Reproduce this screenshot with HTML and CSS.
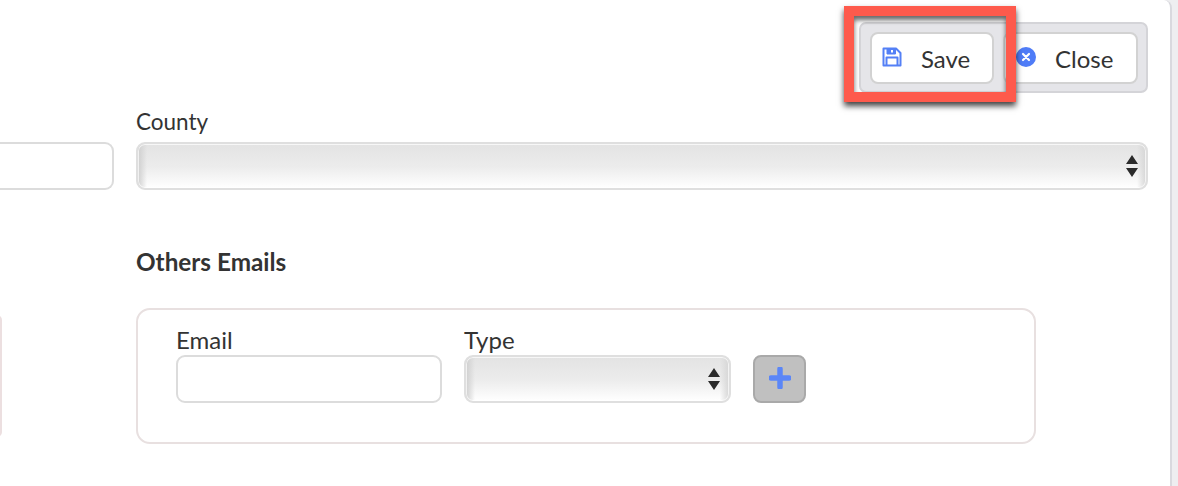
FILE: index.html
```html
<!DOCTYPE html>
<html lang="en-US">
	<head>
		<title>Contact</title>
		<link rel="stylesheet" href="styles.css">
	</head>
	<body>
		<div class="panel">
			<div class="toolbar">
				<div class="btn-group">
					<button class="btn btn-save">
						<svg class="btn-icon" width="20" height="20" viewBox="0 0 20 20" fill="none" stroke="#5480f6" stroke-width="2" stroke-linejoin="round">
							<path d="M1.5 1.5h12.5l4.5 4.5v12.5h-17z"/>
							<path d="M5 2h8.5v5H5z" fill="#5480f6" stroke-width="1"/>
							<path d="M10 3v2.5" stroke="#fff" stroke-width="2"/>
							<path d="M4.5 18v-7.500h11v7.500"/>
						</svg>
						<span class="btn-text">Save</span>
					</button>
					<button class="btn btn-close">
						<svg class="btn-icon" width="20" height="20" viewBox="0 0 20 20">
							<circle cx="10" cy="10" r="10" fill="#4f7cf7"/>
							<path d="M7 7l6 6M13 7l-6 6" stroke="#fff" stroke-width="2.200" stroke-linecap="round"/>
						</svg>
						<span class="btn-text">Close</span>
					</button>
				</div>
			</div>

			<div class="form-row">
				<div class="field field-cut">
					<input class="input" type="text">
				</div>
				<div class="field field-county">
					<label>County</label>
					<div class="select select-wide">
						<svg width="12" height="22" viewBox="0 0 12 22" fill="#2b2b2b">
							<path d="M6 0l6 9H0zM6 22l-6-9h12z"/>
						</svg>
					</div>
				</div>
			</div>

			<div class="lower">
				<div class="side-box"></div>
				<div class="emails">
					<h3>Others Emails</h3>
					<div class="email-box">
						<div class="field field-email">
							<label>Email</label>
							<input class="input" type="text">
						</div>
						<div class="field field-type">
							<label>Type</label>
							<div class="select">
								<svg width="12" height="22" viewBox="0 0 12 22" fill="#2b2b2b">
									<path d="M6 0l6 9H0zM6 22l-6-9h12z"/>
								</svg>
							</div>
						</div>
						<button class="add-btn">
							<svg width="22" height="22" viewBox="0 0 22 22">
								<path d="M11 2v18M2 11h18" stroke="#5b86f7" stroke-width="5.500" stroke-linecap="round"/>
							</svg>
						</button>
					</div>
				</div>
			</div>
		</div>

		<div class="callout"></div>
	</body>
</html>
```

FILE: styles.css
```css
* {
	box-sizing: border-box;
	font-family: Lato, "Helvetica Neue", Arial, sans-serif;
}

body {
	margin: 0;
	height: 486px;
	overflow: hidden;
	background: #eeeef0;
	color: #333;
}

.panel {
	position: relative;
	width: 1172px;
	height: 486px;
	background: #fff;
	border-right: 2px solid #d9d9de;
	border-top-right-radius: 8px;
}

.toolbar {
	display: flex;
	justify-content: flex-end;
	padding: 22px 22px 0 0;
}

.btn-group {
	display: flex;
	gap: 9px;
	padding: 8px 8px 8px 9px;
	width: 289px;
	height: 71px;
	background: #e5e5e9;
	border: 2px solid #d4d4d8;
	border-radius: 7px;
}

.btn {
	display: flex;
	align-items: center;
	height: 52px;
	padding: 0;
	background: #fff;
	color: #333;
	font-size: 24px;
	border: 2px solid #d2d2d2;
	border-radius: 8px;
}
.btn-save {
	width: 124px;
	padding-left: 10px;
}
.btn-save .btn-icon {
	margin-right: 19px;
	margin-top: -3px;
}
.btn-close {
	width: 135px;
	padding-left: 11px;
}
.btn-close .btn-icon {
	margin-right: 19px;
	margin-top: -3px;
}

.form-row {
	display: flex;
	margin-top: 15px;
	gap: 22px;
}

.field {
	display: flex;
	flex-direction: column;
}
.field label {
	font-size: 24px;
	line-height: 26px;
	margin-bottom: 2px;
}

.field-cut {
	width: 114px;
	padding-top: 34px;
}
.field-cut .input {
	border-left: 0;
	border-top-left-radius: 0;
	border-bottom-left-radius: 0;
	width: 100%;
}
.field-county {
	width: 1012px;
}
.field-county label {
	font-size: 22.5px;
	line-height: 28px;
	margin-bottom: 6px;
}

.input {
	height: 48px;
	background: #fff;
	border: 2px solid #dcdcdc;
	border-radius: 9px;
	outline: none;
}

.select {
	display: flex;
	align-items: center;
	justify-content: flex-end;
	height: 48px;
	padding-right: 9px;
	border: 2px solid #dfdfdf;
	border-radius: 9px;
	box-shadow: inset 0 0 0 1px rgba(255, 255, 255, 0.7);
	background:
		linear-gradient(90deg, #cfcfcf 0, rgba(255, 255, 255, 0) 9px, rgba(255, 255, 255, 0) calc(100% - 9px), #d6d6d6 100%),
		linear-gradient(180deg, #e3e3e3 0, #ececec 52%, #fff 100%);
}
.select-wide {
	padding-right: 8px;
}

.lower {
	display: flex;
	margin-top: 58px;
}
.side-box {
	position: absolute;
	left: -20px;
	top: 315px;
	width: 22px;
	height: 122px;
	border: 2px solid #ecdfe0;
	border-radius: 5px;
}
.emails {
	margin-left: 136px;
	width: 900px;
}
.emails h3 {
	margin: 0 0 32px;
	font-size: 24.3px;
	line-height: 27px;
	padding-bottom: 1px;
	font-weight: 700;
}

.email-box {
	display: flex;
	align-items: flex-end;
	height: 136px;
	padding: 18px 38px 39px 38px;
	border: 2px solid #e8e0e0;
	border-radius: 14px;
}

.field-email {
	width: 266px;
	margin-right: 22px;
}
.field-type {
	width: 267px;
	margin-right: 22px;
}

.add-btn {
	display: flex;
	align-items: center;
	justify-content: center;
	width: 53px;
	height: 48px;
	padding: 0 0 2px;
	background: #c0c0c0;
	border: 2px solid #a9a9a9;
	border-radius: 8px;
}

/* annotation over the save button */
.callout {
	position: absolute;
	left: 844px;
	top: 6px;
	width: 172px;
	height: 96px;
	border: 10px solid #fe5a4c;
	box-shadow: 0 4px 6px rgba(0, 0, 0, 0.75), inset 0 4px 5px rgba(0, 0, 0, 0.6);
}
```
